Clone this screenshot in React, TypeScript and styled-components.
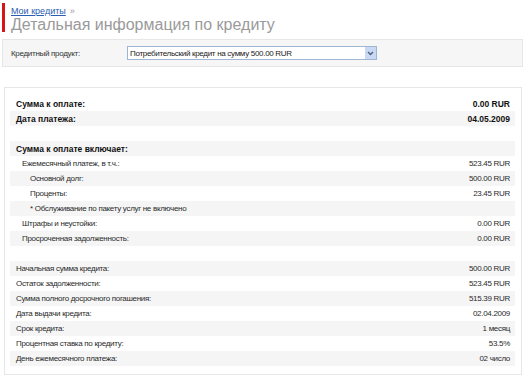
import React from "react";
import styled, { createGlobalStyle } from "styled-components";

const GlobalStyle = createGlobalStyle`
    body {
        margin: 0;
        background: #fff;
        font-family: "Liberation Sans", Arial, sans-serif;
        font-size: 11px;
        color: #333;
    }
`;

const Page = styled.div`
    width: 528px;
    padding: 3px 5px 0 2px;
    box-sizing: border-box;
`;

const Header = styled.header`
    border-left: 3px solid #d8141b;
    padding: 3px 0 2px 6px;
    height: 24px;
`;

const Crumb = styled.div`
    font-size: 9px;
    line-height: 10px;
    color: #999;
    a {
        color: #2a5db0;
        text-decoration: underline;
        margin-right: 4px;
    }
`;

const Title = styled.h1`
    margin: 0;
    font-weight: normal;
    font-size: 16px;
    line-height: 17px;
    color: #9a9a9a;
`;

const ProductBar = styled.section`
    display: flex;
    align-items: center;
    margin-top: 7px;
    height: 26px;
    border: 1px solid #e6e6e6;
    background: #f6f6f6;
    padding-left: 8px;
`;

const ProductLabel = styled.span`
    width: 116px;
    font-size: 8px;
    letter-spacing: -0.3px;
    color: #333;
`;

const Select = styled.div`
    display: flex;
    align-items: center;
    width: 246px;
    height: 12px;
    border: 1px solid #9eb6d1;
    background: #fff;
    font-size: 8px;
    letter-spacing: -0.3px;
    color: #1a1a1a;
    padding-left: 2px;
`;

const SelectText = styled.span`
    flex: 1;
`;

const SelectButton = styled.span`
    display: flex;
    align-items: center;
    justify-content: center;
    width: 11px;
    height: 12px;
    background: #c9d8f3;
`;

const Panel = styled.section`
    margin: 20px 1px 0 2px;
    border: 1px solid #e6e6e6;
    padding: 8px 6px 8px 5px;
`;

const Row = styled.div<{ $indent?: number; $bold?: boolean }>`
    display: flex;
    align-items: center;
    justify-content: space-between;
    height: 15px;
    padding: 0 5px 0 ${(p) => 6 + (p.$indent ?? 0)}px;
    font-size: ${(p) => (p.$bold ? "8.5px" : "8px")};
    letter-spacing: ${(p) => (p.$bold ? "0" : "-0.3px")};
    font-weight: ${(p) => (p.$bold ? "bold" : "normal")};
    color: ${(p) => (p.$bold ? "#111" : "#2a2a2a")};
    &:nth-child(even) {
        background: #f5f5f5;
    }
`;

type Item = [string, string, number?, boolean?];

const rows: Item[] = [
    ["Сумма к оплате:", "0.00 RUR", 0, true],
    ["Дата платежа:", "04.05.2009", 0, true],
    ["", ""],
    ["Сумма к оплате включает:", "", 0, true],
    ["Ежемесячный платеж, в т.ч.:", "523.45 RUR", 6],
    ["Основной долг:", "500.00 RUR", 14],
    ["Проценты:", "23.45 RUR", 14],
    ["* Обслуживание по пакету услуг не включено", "", 14],
    ["Штрафы и неустойки:", "0.00 RUR", 6],
    ["Просроченная задолженность:", "0.00 RUR", 6],
    ["", ""],
    ["Начальная сумма кредита:", "500.00 RUR"],
    ["Остаток задолженности:", "523.45 RUR"],
    ["Сумма полного досрочного погашения:", "515.39 RUR"],
    ["Дата выдачи кредита:", "02.04.2009"],
    ["Срок кредита:", "1 месяц"],
    ["Процентная ставка по кредиту:", "53.5%"],
    ["День ежемесячного платежа:", "02 число"],
];

export default function App() {
    return (
        <Page>
            <GlobalStyle />
            <Header>
                <Crumb>
                    <a href="#">Мои кредиты</a>»
                </Crumb>
                <Title>Детальная информация по кредиту</Title>
            </Header>
            <ProductBar>
                <ProductLabel>Кредитный продукт:</ProductLabel>
                <Select>
                    <SelectText>Потребительский кредит на сумму 500.00 RUR</SelectText>
                    <SelectButton>
                        <svg width="7" height="5" viewBox="0 0 7 5">
                            <path d="M1 1 L3.5 3.5 L6 1" fill="none" stroke="#4d6185" strokeWidth="1.4" />
                        </svg>
                    </SelectButton>
                </Select>
            </ProductBar>
            <Panel>
                {rows.map(([label, value, indent, bold], i) => (
                    <Row key={i} $indent={indent} $bold={bold}>
                        <span>{label}</span>
                        <span>{value}</span>
                    </Row>
                ))}
            </Panel>
        </Page>
    );
}
